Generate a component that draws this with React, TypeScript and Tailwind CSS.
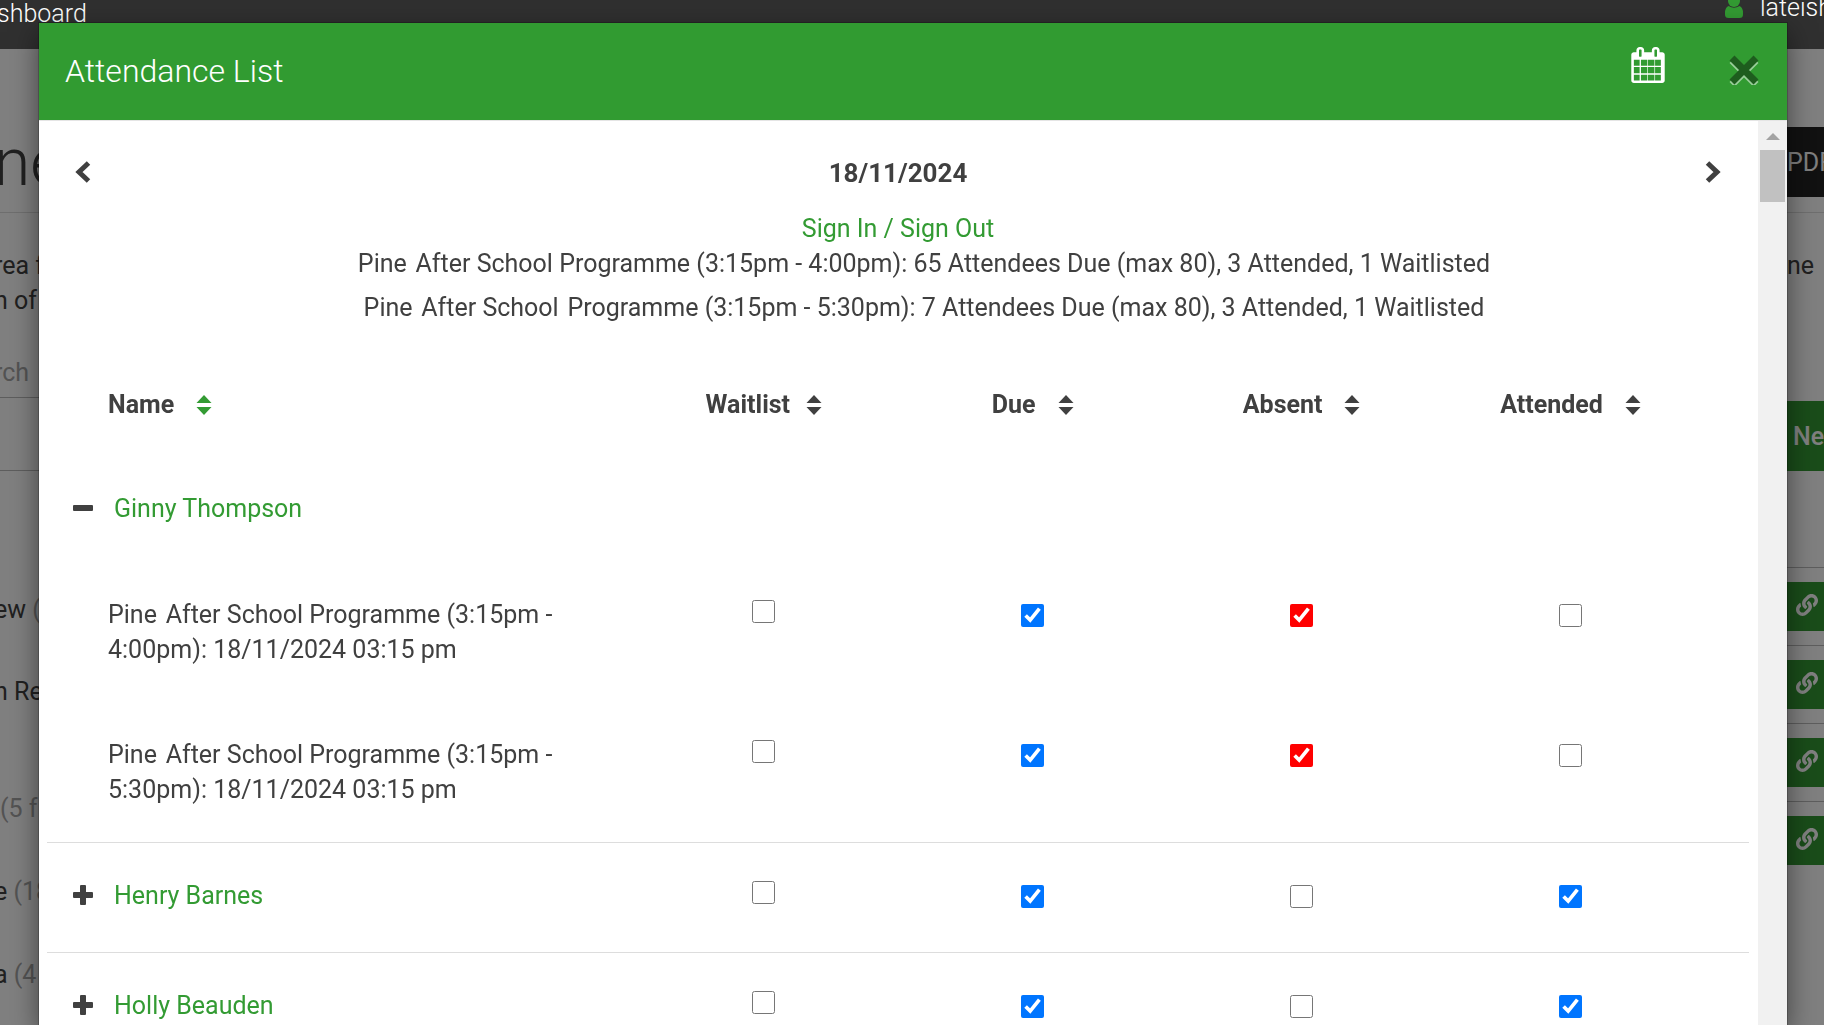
import { useState } from "react";
import { FaLink } from "react-icons/fa";

type Marks = {
    waitlist: boolean;
    due: boolean;
    absent: boolean;
    attended: boolean;
};

type Session = Marks & { time: string; end: string };

type Attendee = Marks & {
    name: string;
    sessions: Session[];
};

const MARKS: { key: keyof Marks; label: string }[] = [
    { key: "waitlist", label: "Waitlist" },
    { key: "due", label: "Due" },
    { key: "absent", label: "Absent" },
    { key: "attended", label: "Attended" },
];

const ATTENDEES: Attendee[] = [
    {
        name: "Ginny Thompson",
        waitlist: false, due: true, absent: true, attended: false,
        sessions: [
            { time: "3:15pm", end: "4:00pm", waitlist: false, due: true, absent: true, attended: false },
            { time: "3:15pm", end: "5:30pm", waitlist: false, due: true, absent: true, attended: false },
        ],
    },
    { name: "Henry Barnes", waitlist: false, due: true, absent: false, attended: true, sessions: [] },
    { name: "Holly Beauden", waitlist: false, due: true, absent: false, attended: true, sessions: [] },
];

function CalendarIcon() {
    return (
        <svg viewBox="0 0 1792 1792" className="size-9" fill="currentColor" aria-hidden="true">
            <path d="M192 1664h288v-288H192v288zm352 0h320v-288H544v288zm-352-352h288V992H192v320zm352 0h320V992H544v320zM192 928h288V640H192v288zm704 736h320v-288H896v288zM544 928h320V640H544v288zm704 736h288v-288h-288v288zm-352-352h320V992H896v320zM576 448V160q0-13-9.500-22.500T544 128h-64q-13 0-22.500 9.500T448 160v288q0 13 9.500 22.500T480 480h64q13 0 22.500-9.500T576 448zm672 864h288V992h-288v320zM896 928h320V640H896v288zm352 0h288V640h-288v288zm96-480V160q0-13-9.500-22.500T1312 128h-64q-13 0-22.500 9.500T1216 160v288q0 13 9.500 22.500t22.500 9.500h64q13 0 22.500-9.500t9.500-22.500zm384-64v1280q0 52-38 90t-90 38H192q-52 0-90-38t-38-90V384q0-52 38-90t90-38h128v-96q0-66 47-113t113-47h64q66 0 113 47t47 113v96h384v-96q0-66 47-113t113-47h64q66 0 113 47t47 113v96h128q52 0 90 38t38 90z" />
        </svg>
    );
}

function CloseIcon() {
    return (
        <svg viewBox="0 0 30 30" className="size-[30px]" aria-hidden="true">
            <path d="M3 5.500l24 24M27 5.500l-24 24" stroke="#98cd98" strokeWidth="7" />
            <path d="M3 3l24 24M27 3l-24 24" stroke="#1e5d1e" strokeWidth="7" />
        </svg>
    );
}

function Chevron({ flip }: { flip?: boolean }) {
    return (
        <svg viewBox="0 0 16 24" className={flip ? "h-6 w-4 rotate-180" : "h-6 w-4"} fill="none" aria-hidden="true">
            <path d="M13.500 3L4 12l9.500 9" stroke="#404040" strokeWidth="5" />
        </svg>
    );
}

function SortIcon({ active }: { active?: boolean }) {
    return (
        <svg viewBox="0 0 16 20" className="h-5 w-4" fill={active ? "#339b33" : "#404040"} aria-hidden="true">
            <path d="M8 0l7.500 8H.5zM8 20l7.500-8H.5z" />
        </svg>
    );
}

function ToggleIcon({ open }: { open: boolean }) {
    return (
        <svg viewBox="0 0 20 20" className="size-5" fill="#404040" aria-hidden="true">
            <rect y="7" width="20" height="6" rx="1" />
            {!open && <rect x="7" width="6" height="20" rx="1" />}
        </svg>
    );
}

function UserIcon() {
    return (
        <svg viewBox="0 0 18 24" className="mb-1 h-6 w-[18px] shrink-0" fill="#339b33" aria-hidden="true">
            <circle cx="9" cy="7" r="6" />
            <path d="M3.500 12q5.500 3.500 11 0Q18 13.500 18 19v1.500Q18 24 14.500 24h-11Q0 24 0 20.500V19q0-5.500 3.500-7z" />
        </svg>
    );
}

function PageBehind() {
    return (
        <div className="flex h-screen justify-between overflow-hidden whitespace-nowrap bg-white pt-[49px] text-[25px] leading-[35px] text-[#404040]">
            <div className="w-1/2">
                <h1 className="h-[164px] border-b border-[#ddd] pt-[68px] text-[66px] leading-[92px] font-light">
                    <span className="-ml-[6px]">ne</span>
                </h1>
                <p className="-ml-[6px] pt-[35px]">rea f<br />n of</p>
                <div className="mt-[6px] h-[74px] border-b border-[#bbb] pt-[31px]">
                    <div className="-ml-[6px] text-[#a6a6a6]">rch</div>
                </div>
                <div className="h-[73px] border-b border-[#bbb]" />
                <div className="-ml-[6px] pt-[121px]">ew <span className="text-[#a6a6a6]">(</span></div>
                <div className="-ml-[6px] pt-[47px]">n Re</div>
                <div className="pt-[82px] text-[#a6a6a6]">(5 f</div>
                <div className="-ml-[6px] pt-12">e <span className="text-[#a6a6a6]">(18</span></div>
                <div className="-ml-[6px] pt-12">a <span className="text-[#a6a6a6]">(4</span></div>
            </div>
            <div className="w-[37px]">
                <div className="h-[164px] border-b border-[#ddd] pt-[78px]">
                    <button type="button" className="h-[70px] w-full overflow-hidden bg-[#222] text-left text-white">PDF</button>
                </div>
                <p className="pt-[35px]">ne</p>
                <button type="button" className="mt-[118px] mb-24 h-[70px] w-full overflow-hidden bg-[#339933] pl-[6px] text-left font-medium text-white">New</button>
                {[1, 2, 3, 4].map((n) => (
                    <div key={n} className="h-[78px] border-t border-[#bbb] pt-[14px]">
                        <button type="button" aria-label="Copy link" className="flex h-[49px] w-full items-center bg-[#339933] pb-1 pl-[9px] text-white">
                            <FaLink className="size-[22px] shrink-0" />
                        </button>
                    </div>
                ))}
            </div>
        </div>
    );
}

function MarkBox({ mark, checked, label }: { mark: keyof Marks; checked: boolean; label: string }) {
    const [on, setOn] = useState(checked);
    return (
        <td className={mark === "waitlist" ? "pt-[38px] align-top" : "pt-[42px] align-top"}>
            <input
                type="checkbox"
                aria-label={label}
                checked={on}
                onChange={(e) => setOn(e.target.checked)}
                className={mark === "absent" ? "mx-auto block size-[23px] accent-[#ff0000]" : "mx-auto block size-[23px]"}
            />
        </td>
    );
}

function AttendeeRows({ attendee }: { attendee: Attendee }) {
    const [open, setOpen] = useState(attendee.sessions.length > 0);
    return (
        <tbody className="border-b border-[#ddd]">
            <tr className={open ? "h-[106px]" : "h-[110px]"}>
                <td className="pt-[42px] pl-[26px] align-top">
                    <button type="button" className="block" aria-label={open ? "Collapse" : "Expand"} onClick={() => setOpen(!open)}>
                        <ToggleIcon open={open} />
                    </button>
                </td>
                <td className="pt-[35px] pl-[6px] align-top">
                    <a href="#" className="text-[#339b33]">{attendee.name}</a>
                </td>
                {MARKS.map((m) =>
                    open ? (
                        <td key={m.key} />
                    ) : (
                        <MarkBox key={m.key} mark={m.key} checked={attendee[m.key]} label={`${attendee.name} ${m.label}`} />
                    )
                )}
                <td />
            </tr>
            {open && attendee.sessions.map((s) => (
                <tr key={s.end} className="h-[140px]">
                    <td />
                    <td className="pt-[35px] pr-8 align-top">
                        Pine{"\u200a"} After School Programme ({s.time} - {s.end}): 18/11/2024 03:15 pm
                    </td>
                    {MARKS.map((m) => (
                        <MarkBox key={m.key} mark={m.key} checked={s[m.key]} label={`${attendee.name} ${s.end} ${m.label}`} />
                    ))}
                    <td />
                </tr>
            ))}
        </tbody>
    );
}

export default function App() {
    return (
        <div className="h-screen overflow-hidden font-[Roboto,sans-serif]">
            <PageBehind />
            <div className="fixed inset-0 bg-black/50" />
            <nav className="fixed inset-x-0 top-0 flex h-[49px] justify-between overflow-hidden bg-[#303030] text-[25px] leading-[28px] font-light text-white">
                <a href="#" className="-ml-[3px]">shboard</a>
                <a href="#" className="flex h-[22px] w-[99px] items-end gap-[17px] whitespace-nowrap">
                    <UserIcon />
                    <span>lateish</span>
                </a>
            </nav>

            <div role="dialog" aria-label="Attendance List" className="fixed inset-x-0 top-[23px] bottom-0 mr-[37px] ml-[39px] flex flex-col bg-white text-[25px] leading-[35px] text-[#404040] shadow-[0_9px_26px_rgba(0,0,0,0.5),0_0_0_1px_rgba(0,0,0,0.2)]">
                <header className="flex h-[98px] shrink-0 items-center border-b border-[#e5e5e5] bg-[#319b31] pr-7 pl-[26px] text-white">
                    <h2 className="flex-1 text-[32px] font-light">Attendance List</h2>
                    <button type="button" aria-label="Choose date" className="mr-[63px] mb-[14px]"><CalendarIcon /></button>
                    <button type="button" aria-label="Close" className="mb-1"><CloseIcon /></button>
                </header>

                <div className="flex min-h-0 flex-1">
                    <main className="min-w-0 flex-1 overflow-hidden pr-[9px] pl-2">
                        <div className="flex items-center justify-between px-7 pt-[35px]">
                            <button type="button" aria-label="Previous day" className="mb-1"><Chevron /></button>
                            <h3 className="text-[26px] font-bold">18/11/2024</h3>
                            <button type="button" aria-label="Next day" className="mb-1"><Chevron flip /></button>
                        </div>
                        <div className="pt-5 text-center">
                            <a href="#" className="text-[#339b33]">Sign In / Sign Out</a>
                            <ul className="space-y-[9px] pb-7 pl-[52px]">
                                <li>Pine{"\u200a"} After School Programme (3:15pm - 4:00pm): 65 Attendees Due (max 80), 3 Attended, 1 Waitlisted</li>
                                <li>Pine{"\u200a"} After School{"\u200a"} Programme (3:15pm - 5:30pm): 7 Attendees Due (max 80), 3 Attended, 1 Waitlisted</li>
                            </ul>
                        </div>

                        <table className="w-full table-fixed border-collapse">
                            <colgroup>
                                <col className="w-[61px]" />
                                <col />
                                {MARKS.map((m) => <col key={m.key} className="w-[15.8%]" />)}
                                <col className="w-11" />
                            </colgroup>
                            <thead>
                                <tr className="h-[103px]">
                                    <td />
                                    <th scope="col" className="text-left">
                                        <button type="button" className="inline-flex items-center gap-[22px]">Name <SortIcon active /></button>
                                    </th>
                                    {MARKS.map((m) => (
                                        <th key={m.key} scope="col">
                                            <button type="button" className={m.key === "waitlist" ? "inline-flex items-center gap-4" : "inline-flex items-center gap-[22px]"}>
                                                {m.label} <SortIcon />
                                            </button>
                                        </th>
                                    ))}
                                    <td />
                                </tr>
                            </thead>
                            {ATTENDEES.map((a) => <AttendeeRows key={a.name} attendee={a} />)}
                        </table>
                    </main>

                    <div className="flex w-[29px] flex-col items-center bg-[#f1f1f1] pt-3" aria-hidden="true">
                        <svg viewBox="0 0 14 7" className="h-[7px] w-[14px]"><path d="M7 0l7 7H0z" fill="#a3a3a3" /></svg>
                        <div className="mt-[10px] h-[52px] w-[25px] bg-[#c1c1c1]" />
                    </div>
                </div>
            </div>
        </div>
    );
}
